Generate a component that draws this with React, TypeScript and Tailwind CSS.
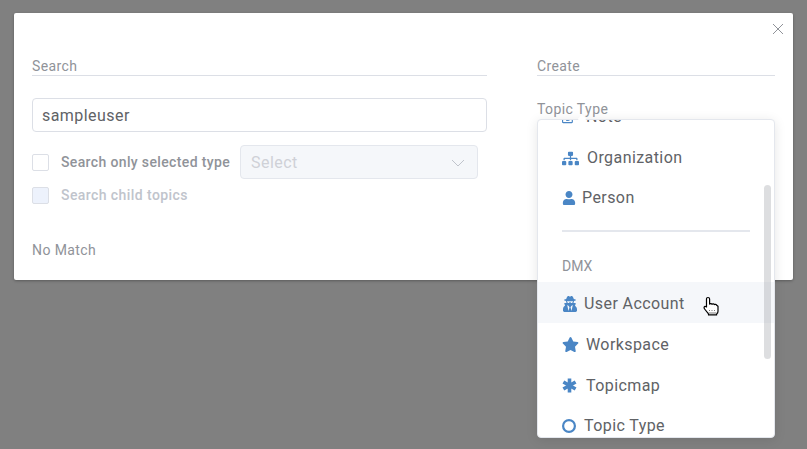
import { FaRegEdit, FaSitemap, FaStar, FaUser, FaUserSecret } from 'react-icons/fa'

const font = { fontFamily: 'Roboto, sans-serif' }

function SectionLabel({ text }: { text: string }) {
  return (
    <div className="h-[20px] border-b border-[#dcdfe6] text-[14px] leading-[21px] text-[#909399] tracking-[0.4px]">
      {text}
    </div>
  )
}

function Checkbox({ disabled }: { disabled?: boolean }) {
  return (
    <span
      className={`block w-[17px] h-[17px] rounded-[2px] border border-[#dcdfe6] ${disabled ? 'bg-[#edf2fc]' : 'bg-white'}`}
    />
  )
}

function HandCursor() {
  return (
    <svg width="18" height="20" viewBox="0 0 18 20" className="absolute left-[703px] top-[296px]">
      <path
        d="M5 1.500c1 0 1.600.6 1.600 1.600v5c.4-.7 2-.7 2.400.2.500-.7 2-.6 2.400.3.600-.5 2-.3 2.300.7l1.300 1v5c0 1.200-.6 2.200-1.400 2.700v.9H5.500v-1L1.600 13c-.9-1.100-.6-2.500.4-2.700l1.500.7V3.100c0-1 .5-1.600 1.500-1.600z"
        fill="#fff"
        stroke="#000"
        strokeWidth="1.2"
        strokeLinejoin="round"
      />
      <path d="M6 14.500h1M8.500 14.500h1M11 14.500h1M5.500 17h8" stroke="#555" strokeWidth="0.8" />
    </svg>
  )
}

function AsteriskIcon() {
  return (
    <svg width="15" height="15" viewBox="0 0 15 15">
      <path d="M7.500 0.500v14M1.400 4l12.200 7M13.600 4L1.400 11" stroke="#4a86c5" strokeWidth="3.600" />
    </svg>
  )
}

function RingIcon() {
  return (
    <svg width="14" height="14" viewBox="0 0 14 14">
      <circle cx="7" cy="7" r="5.900" fill="none" stroke="#4a86c5" strokeWidth="2.200" />
    </svg>
  )
}

function MenuItem({
  icon,
  label,
  gap,
  hover,
  height = 'h-[40px]',
}: {
  icon: React.ReactNode
  label: string
  gap: string
  hover?: boolean
  height?: string
}) {
  return (
    <div className={`${height} flex items-center pl-[24px] text-[16px] text-[#606266] tracking-[0.42px] ${hover ? 'bg-[#f5f7fa]' : ''}`}>
      <span className={`flex items-center text-[#4a86c5] ${gap}`}>{icon}</span>
      {label}
    </div>
  )
}

export default function App() {
  return (
    <div className="relative w-[807px] h-[449px] overflow-hidden bg-[#808080] pt-[13px] px-[14px]" style={font}>
      {/* Dialog */}
      <div className="relative w-[779px] h-[267px] bg-white rounded-[2px] shadow-[0_1px_3px_rgba(0,0,0,0.3)] pt-[43px] pl-[18px] flex gap-[50px]">
        <svg width="12" height="12" viewBox="0 0 12 12" className="absolute right-[9px] top-[10px]">
          <path d="M1 1l10 10M11 1L1 11" stroke="#909399" strokeWidth="1" />
        </svg>

        {/* Search column */}
        <div className="w-[455px]">
          <SectionLabel text="Search" />
          <div className="mt-[22px] h-[34px] flex items-center rounded-[4px] border border-[#dcdfe6] px-[9px] pt-[1px] text-[16px] text-[#606266] tracking-[0.45px]">
            sampleuser
          </div>
          <div className="mt-[13px] flex items-center h-[34px]">
            <Checkbox />
            <span className="ml-[12px] w-[179px] text-[14px] font-medium text-[#909399] tracking-[0.36px]">Search only selected type</span>
            <div className="w-[238px] h-[34px] flex items-center justify-between rounded-[4px] border border-[#e4e7ed] bg-[#f5f7fa] pl-[10px] pr-[12px] pt-[1px] text-[16px] text-[#cfd1d7] tracking-[0.45px]">
              Select
              <svg width="14" height="8" viewBox="0 0 14 8">
                <path d="M1 1l6 6 6-6" fill="none" stroke="#c0c4cc" strokeWidth="1" />
              </svg>
            </div>
          </div>
          <div className="mt-[7px] flex items-center h-[18px]">
            <Checkbox disabled />
            <span className="ml-[12px] text-[14px] font-medium text-[#c0c4cc] tracking-[0.42px]">Search child topics</span>
          </div>
          <div className="mt-[36px] text-[14px] text-[#909399] tracking-[0.4px]">No Match</div>
        </div>

        {/* Create column */}
        <div className="w-[238px]">
          <SectionLabel text="Create" />
          <div className="mt-[24px] text-[14px] leading-[19px] text-[#909399] tracking-[0.4px]">Topic Type</div>
        </div>
      </div>

      {/* Dropdown */}
      <div className="absolute left-[537px] top-[119px] w-[238px] h-[319px] rounded-[4px] border border-[#e4e7ed] bg-white shadow-[0_2px_12px_rgba(0,0,0,0.1)] overflow-hidden">
        <div className="-mt-[25px]">
          <MenuItem icon={<FaRegEdit size={14} />} label="Note" gap="mr-[10px]" height="h-[43px]" />
          <MenuItem icon={<FaSitemap size={17} />} label="Organization" gap="mr-[8px]" />
          <MenuItem icon={<FaUser size={14} />} label="Person" gap="mr-[6px]" />
          <div className="mx-[24px] mt-[12px] h-[2px] bg-[#e4e7ed]" />
          <div className="mt-[26px] pl-[24px] h-[16px] flex items-center text-[14px] text-[#909399]">DMX</div>
          <div className="mt-[8px]">
            <MenuItem icon={<FaUserSecret size={16} />} label="User Account" gap="mr-[6px]" hover height="h-[41px] pt-[2px]" />
            <MenuItem icon={<FaStar size={17} />} label="Workspace" gap="mr-[7px]" height="h-[41px] mt-[1px]" />
            <MenuItem icon={<AsteriskIcon />} label="Topicmap" gap="mr-[9px]" height="h-[41px]" />
            <MenuItem icon={<RingIcon />} label="Topic Type" gap="mr-[8px]" height="h-[40px]" />
          </div>
        </div>
      </div>

      {/* Popper arrow */}
      <span className="absolute left-[579px] top-[116px] w-[6px] h-[6px] rotate-45 bg-white" />

      {/* Scrollbar thumb */}
      <span className="absolute left-[764px] top-[185px] w-[7px] h-[174px] rounded-[4px] bg-[#909399]/30" />

      <HandCursor />
    </div>
  )
}
